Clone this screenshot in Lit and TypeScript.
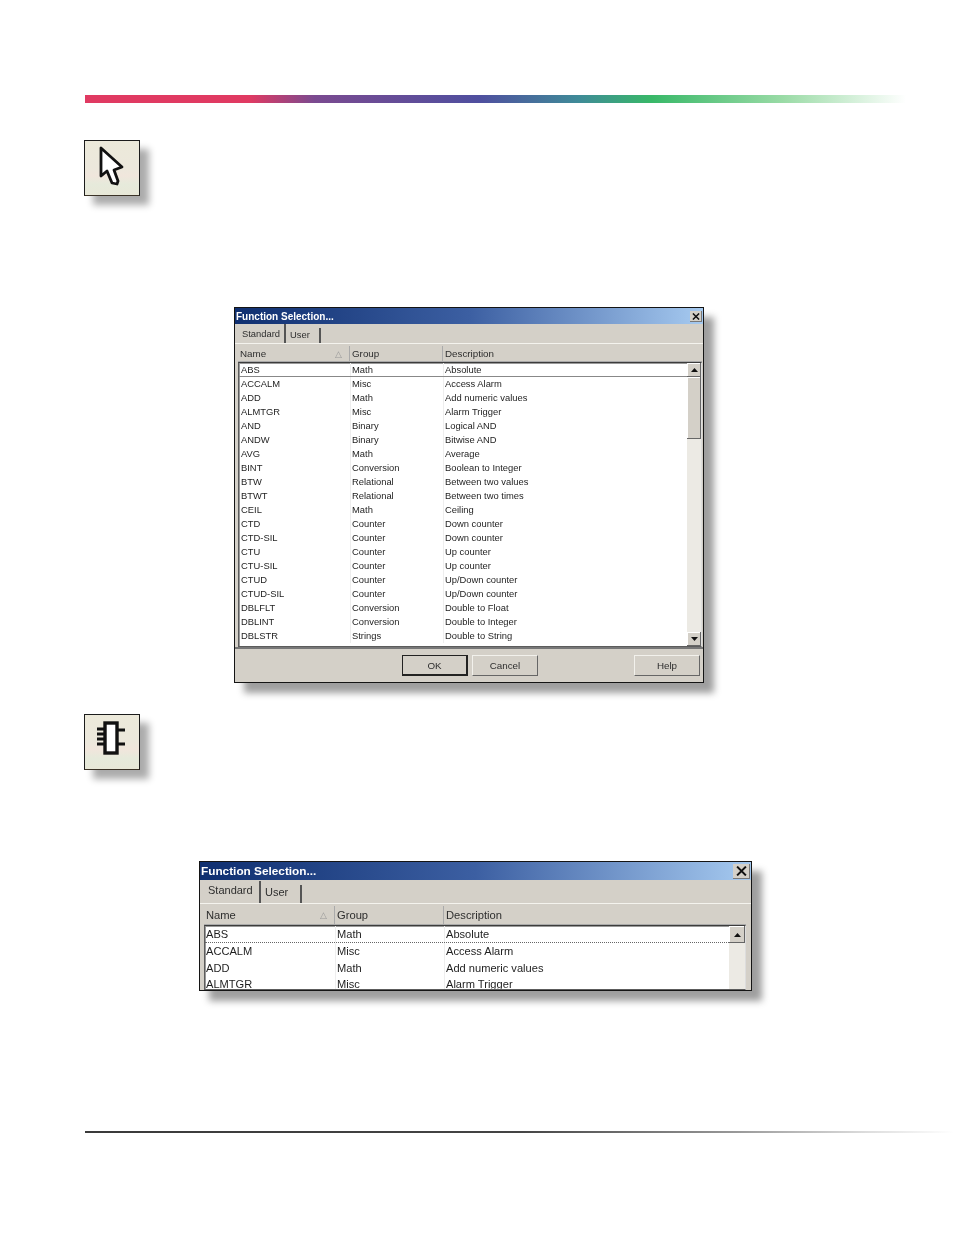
import { LitElement, html, css } from "lit";
import { customElement, property } from "lit/decorators.js";

const ROWS: [string, string, string][] = [
  ["ABS", "Math", "Absolute"],
  ["ACCALM", "Misc", "Access Alarm"],
  ["ADD", "Math", "Add numeric values"],
  ["ALMTGR", "Misc", "Alarm Trigger"],
  ["AND", "Binary", "Logical AND"],
  ["ANDW", "Binary", "Bitwise AND"],
  ["AVG", "Math", "Average"],
  ["BINT", "Conversion", "Boolean to Integer"],
  ["BTW", "Relational", "Between two values"],
  ["BTWT", "Relational", "Between two times"],
  ["CEIL", "Math", "Ceiling"],
  ["CTD", "Counter", "Down counter"],
  ["CTD-SIL", "Counter", "Down counter"],
  ["CTU", "Counter", "Up counter"],
  ["CTU-SIL", "Counter", "Up counter"],
  ["CTUD", "Counter", "Up/Down counter"],
  ["CTUD-SIL", "Counter", "Up/Down counter"],
  ["DBLFLT", "Conversion", "Double to Float"],
  ["DBLINT", "Conversion", "Double to Integer"],
  ["DBLSTR", "Strings", "Double to String"],
];

@customElement("fn-dialog")
class FnDialog extends LitElement {
  @property({ type: Boolean }) large = false;
  static styles = css`
    :host { display: block; font-family: "Liberation Sans", Arial, sans-serif; color: #2c2c2c; }
    .win { border: 1px solid #141414; background: #d4d0c8; box-shadow: 10px 10px 7px rgba(0,0,0,.38); box-sizing: border-box; display: flex; flex-direction: column; overflow: hidden; }
    .small .win { width: 470px; height: 376px; }
    .large .win { width: 553px; height: 130px; }
    .title { display: flex; align-items: center; justify-content: space-between; background: linear-gradient(90deg, #0f2f70 0%, #3c5fa2 50%, #a6caf0 100%); color: #fff; font-weight: 700; flex: none; box-sizing: border-box; filter: blur(.3px); }
    .small .title { height: 16px; font-size: 10px; padding: 0 0 0 1px; }
    .large .title { height: 18px; font-size: 11.8px; padding: 0 0 1px 1px; }
    .close { background: #d4d0c8; color: #111; display: flex; align-items: center; justify-content: center; box-shadow: inset -1px -1px 0 #777; }
    .small .close { width: 12px; height: 11px; margin-right: 1px; }
    .large .close { width: 17px; height: 15px; margin: 1px 1px 0 0; }
    .tabs { display: flex; align-items: flex-end; flex: none; border-bottom: 1px solid #f4f3ee; }
    .small .tabs { height: 19px; padding-left: 4px; font-size: 9.4px; }
    .large .tabs { height: 23px; padding-left: 4px; font-size: 11px; }
    .tab { color: #2e2e2e; border-right: 2px solid #555; box-sizing: border-box; filter: blur(.3px); }
    .small .tab.on { width: 47px; height: 19px; padding: 4px 0 0 3px; }
    .small .tab.off { width: 35px; height: 15px; padding: 1px 0 0 4px; }
    .large .tab.on { width: 57px; height: 22px; padding: 3px 0 0 4px; }
    .large .tab.off { width: 41px; height: 18px; padding: 1px 0 0 4px; }
    .hdr { display: grid; flex: none; color: #2e2e2e; background: #d4d0c8; border-bottom: 1px solid #aaa; }
    .small .hdr { grid-template-columns: 112px 93px 1fr; height: 15px; margin: 2px 1px 0 3px; font-size: 9.8px; line-height: 16px; }
    .large .hdr { grid-template-columns: 131px 109px 1fr; height: 18px; margin: 2px 5px 0 4px; font-size: 11.2px; line-height: 18px; }
    .hdr > div { padding-left: 2px; border-right: 1px solid #aaa; position: relative; filter: blur(.3px); }
    .hdr > div:last-child { border-right: 0; }
    .sort { position: absolute; right: 7px; top: 0; color: #999; font-size: 9px; }
    .list { flex: 1; display: flex; background: #fff; border: 1px solid #5c5c5c; border-top-color: #3c3c3c; border-right-color: #ddd; min-height: 0; overflow: hidden; box-shadow: inset 1px 1px 0 #999; }
    .small .list { margin: 0 1px 0 3px; }
    .large .list { margin: 0 5px 0 4px; }
    .rows { flex: 1; min-width: 0; }
    .row { display: grid; white-space: nowrap; color: #1e1e1e; }
    .small .row { grid-template-columns: 112px 93px 1fr; height: 14px; line-height: 14px; font-size: 9.4px; }
    .large .row { grid-template-columns: 131px 109px 1fr; height: 16.6px; line-height: 16.6px; font-size: 11.1px; }
    .row > div { padding-left: 1px; filter: blur(.3px); }
    .small .row > div:first-child { padding-left: 2px; }
    .row > div + div { padding-left: 1px; border-left: 1px solid #eee; margin-left: -1px; }
    .row.sel { box-sizing: border-box; }
    .small .row.sel { height: 14px; line-height: 13px; border-bottom: 1px solid #888; }
    .large .row.sel { height: 17px; line-height: 16px; border-bottom: 1px dotted #666; }
    .sb { flex: none; background: #eceae4; display: flex; flex-direction: column; justify-content: space-between; position: relative; }
    .small .sb { width: 14px; }
    .large .sb { width: 16px; }
    .arrow { background: #d4d0c8; box-shadow: inset -1px -1px 0 #666, inset 1px 1px 0 #fff; display: flex; align-items: center; justify-content: center; flex: none; }
    .small .arrow { height: 14px; }
    .large .arrow { height: 17px; }
    .thumb { position: absolute; left: 0; right: 0; top: 14px; height: 62px; background: #d4d0c8; box-shadow: inset -1px -1px 0 #666, inset 1px 1px 0 #fff; }
    .btns { flex: none; height: 35px; border-top: 2px solid #777; font-size: 9.8px; display: flex; align-items: center; box-sizing: border-box; padding: 0 3px 0 167px; }
    .btn { height: 21px; display: flex; align-items: center; justify-content: center; box-sizing: border-box; color: #2e2e2e; border: 1px solid #f2f1ec; border-right-color: #666; border-bottom-color: #666; filter: blur(.3px); }
    .btn.def { border: 1px solid #222; border-right-width: 2px; border-bottom-width: 2px; width: 66px; margin-right: 4px; }
    .btn.cancel { width: 66px; }
    .btn.help { width: 66px; margin-left: auto; }
  `;
  render() {
    const rows = this.large ? ROWS.slice(0, 4) : ROWS;
    const size = this.large ? "large" : "small";
    return html`<div class=${size}><div class="win">
      <div class="title"><span>Function Selection...</span><span class="close"><svg viewBox="0 0 10 9" width="${this.large ? 11 : 8}" height="${this.large ? 10 : 7}"><path d="M1 0.5 L9 8.5 M9 0.5 L1 8.5" stroke="#111" stroke-width="1.8" fill="none"/></svg></span></div>
      <div class="tabs"><div class="tab on">Standard</div><div class="tab off">User</div></div>
      <div class="hdr"><div>Name<span class="sort">△</span></div><div>Group</div><div>Description</div></div>
      <div class="list">
        <div class="rows">${rows.map((r, i) => html`<div class="row ${i === 0 ? "sel" : ""}"><div>${r[0]}</div><div>${r[1]}</div><div>${r[2]}</div></div>`)}</div>
        <div class="sb">
          <div class="arrow"><svg width="7" height="4" viewBox="0 0 7 4"><path d="M3.5 0 L7 4 H0Z" fill="#111"/></svg></div>
          ${this.large ? "" : html`<div class="thumb"></div><div class="arrow"><svg width="7" height="4" viewBox="0 0 7 4"><path d="M0 0 H7 L3.5 4Z" fill="#111"/></svg></div>`}
        </div>
      </div>
      ${this.large ? "" : html`<div class="btns"><div class="btn def">OK</div><div class="btn cancel">Cancel</div><div class="btn help">Help</div></div>`}
    </div></div>`;
  }
}

@customElement("app-root")
class AppRoot extends LitElement {
  static styles = css`
    :host { display: block; width: 954px; height: 1235px; background: #fff; overflow: hidden; }
    .page { display: flex; flex-direction: column; height: 1235px; box-sizing: border-box; padding-top: 95px; }
    .bar { height: 8px; margin: 0 48px 0 85px; flex: none; background: linear-gradient(90deg, #e03a62 0%, #e03a62 20%, #7a4a90 28%, #4f4f9f 48%, #3f8a98 60%, #38b868 69%, #9adba6 85%, #ffffff 100%); }
    .icon { width: 56px; height: 56px; box-sizing: border-box; border: 1px solid #1c1c1c; border-bottom-color: #3a3226; background: linear-gradient(180deg, #ece9da 0%, #ece8dc 50%, #f0e6dc 65%, #e6eadb 80%, #e8e8d8 100%); box-shadow: 9px 9px 7px rgba(0,0,0,.33); margin-left: 84px; flex: none; }
    .icon svg { display: block; filter: blur(.5px); }
    .i1 { margin-top: 37px; }
    .i2 { margin-top: 31px; }
    .d1 { margin: 111px 0 0 234px; }
    .d2 { margin: 91px 0 0 199px; }
    .rule { margin: 140px 0 0 85px; height: 2px; flex: none; background: linear-gradient(90deg, #3a3a3a 0%, #444 50%, #999 75%, #ddd 90%, #fff 100%); }
  `;
  render() {
    return html`<div class="page">
      <div class="bar"></div>
      <div class="icon i1"><svg width="54" height="54" viewBox="0 0 54 54"><path d="M16 7 L16 35 L22 30 L27 42 L32 43 L33 40 L29 29 L37 26 Z" fill="#fff" stroke="#111" stroke-width="2.8" stroke-linejoin="round"/></svg></div>
      <fn-dialog class="d1"></fn-dialog>
      <div class="icon i2"><svg width="54" height="54" viewBox="0 0 54 54"><path d="M12 14 H20 M12 19 H20 M12 24 H20 M12 29 H20 M32 15 H40 M32 29 H40" stroke="#111" stroke-width="3"/><rect x="20" y="8" width="12" height="30" fill="#fff" stroke="#111" stroke-width="3.4"/></svg></div>
      <fn-dialog class="d2" large></fn-dialog>
      <div class="rule"></div>
    </div>`;
  }
}
